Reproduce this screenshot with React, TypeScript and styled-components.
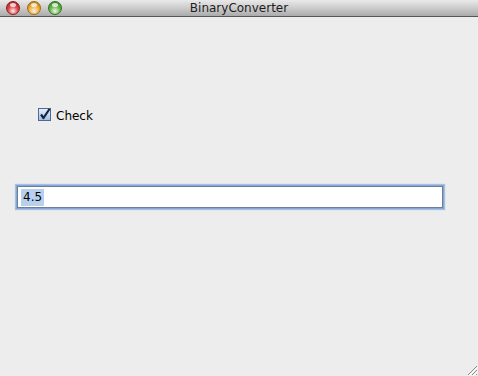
import React from "react";
import styled, { createGlobalStyle } from "styled-components";

const Global = createGlobalStyle`
  html, body { margin: 0; padding: 0; background: #ededed; }
  body { font-family: "DejaVu Sans", "Liberation Sans", sans-serif; }
`;

const Window = styled.div`
  width: 478px;
  height: 376px;
  background: #ededed;
  display: flex;
  flex-direction: column;
  position: relative;
  overflow: hidden;
`;

const TitleBar = styled.div`
  height: 16px;
  flex: none;
  border-bottom: 1px solid #565656;
  background: linear-gradient(#e9e9e9, #d2d2d2 40%, #ababab);
  display: flex;
  align-items: center;
  position: relative;
`;

const Lights = styled.div`
  display: flex;
  gap: 7px;
  padding-left: 6px;
  position: absolute;
  left: 0;
  top: 1px;
`;

const Light = styled.div<{ $c: string; $d: string }>`
  width: 14px;
  height: 14px;
  border-radius: 50%;
  box-sizing: border-box;
  border: 1px solid ${(p) => p.$d};
  background: radial-gradient(circle at 50% 75%, #ffffffcc 0%, ${(p) => p.$c} 45%, ${(p) => p.$d} 100%);
  position: relative;
  &::after {
    content: "";
    position: absolute;
    left: 3px;
    top: 1px;
    width: 6px;
    height: 4px;
    border-radius: 50%;
    background: rgba(255, 255, 255, 0.75);
  }
`;

const Title = styled.div`
  flex: 1;
  text-align: center;
  font-size: 12px;
  color: #1d1d1d;
  line-height: 16px;
  padding-left: 0px;
`;

const Content = styled.div`
  flex: 1;
  display: flex;
  flex-direction: column;
  padding-top: 91px;
`;

const CheckRow = styled.label`
  display: flex;
  align-items: center;
  gap: 4px;
  padding-left: 38px;
  height: 14px;
  font-size: 12px;
  color: #000;
`;

const Box = styled.span`
  width: 14px;
  height: 14px;
  display: block;
`;

const CheckText = styled.span`
  line-height: 14px;
  position: relative;
  top: 1px;
`;

const Field = styled.div`
  margin: 64px 0 0 17px;
  width: 426px;
  height: 22px;
  box-sizing: border-box;
  background: #fff;
  border: 1px solid #6b7f9c;
  box-shadow: 0 0 0 1px #86a7d6, 0 0 1px 2px #a6c0e4;
  display: flex;
  align-items: center;
  padding-left: 3px;
  font-size: 12px;
  color: #000;
`;

const Selected = styled.span`
  background: #b7d0ee;
  line-height: 17px;
  padding: 0 2px 0 2px;
`;

const Grip = styled.svg`
  position: absolute;
  right: 0;
  bottom: 0;
`;

export default function App() {
  return (
    <Window>
      <Global />
      <TitleBar>
        <Lights>
          <Light $c="#e0484a" $d="#8e1c1e" />
          <Light $c="#f2b23c" $d="#a26a10" />
          <Light $c="#6ab84a" $d="#2f7420" />
        </Lights>
        <Title>BinaryConverter</Title>
      </TitleBar>
      <Content>
        <CheckRow>
          <Box>
            <svg width="14" height="14" viewBox="0 0 14 14">
              <defs>
                <linearGradient id="cb" x1="0" y1="0" x2="0" y2="1">
                  <stop offset="0" stopColor="#e8f0fb" />
                  <stop offset="1" stopColor="#9fbde6" />
                </linearGradient>
              </defs>
              <rect x="0.5" y="0.5" width="12" height="12" fill="url(#cb)" stroke="#4f6a92" />
              <path d="M3 6.5 L5.5 10 L11.5 1" fill="none" stroke="#16233f" strokeWidth="2.2" strokeLinejoin="round" />
            </svg>
          </Box>
          <CheckText>Check</CheckText>
        </CheckRow>
        <Field>
          <Selected>4.5</Selected>
        </Field>
      </Content>
      <Grip width="14" height="14" viewBox="0 0 14 14">
        <path d="M13 4 L4 13 M13 8 L8 13 M13 12 L12 13" stroke="#8a8a8a" strokeWidth="1" />
        <path d="M14 5 L5 14 M14 9 L9 14" stroke="#ffffff" strokeWidth="1" />
      </Grip>
    </Window>
  );
}
